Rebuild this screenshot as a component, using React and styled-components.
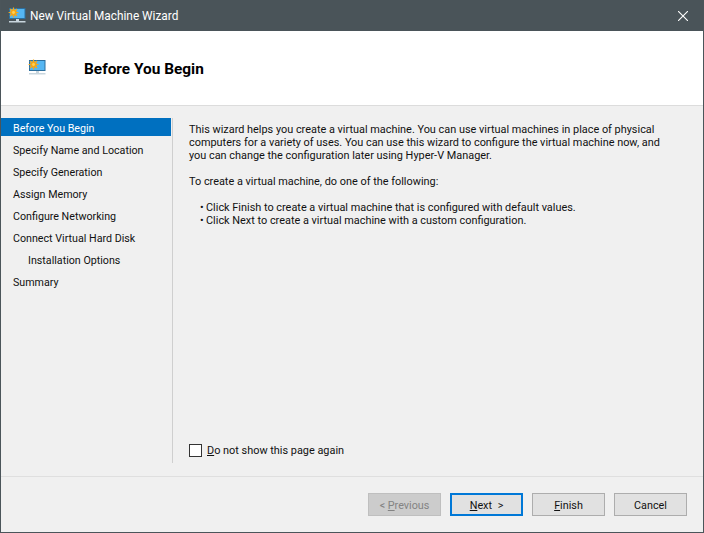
import styled, { createGlobalStyle } from "styled-components";

const GlobalStyle = createGlobalStyle`
  html, body {
    margin: 0;
    padding: 0;
    background: #f0f0f0;
  }
  * {
    box-sizing: border-box;
  }
`;

const MonitorIcon = ({ size = 18 }) => (
  <svg width={size} height={size} viewBox="0 0 18 18">
    <rect x="1.5" y="1.5" width="15.5" height="10" fill="#55b6f2" stroke="#2c6f9e" />
    <path d="M8 12h3v2H8z" fill="#c8d4dc" />
    <path d="M1 14h16.5v1.5H1z" fill="#c9d6de" />
    <circle cx="5.5" cy="5.5" r="3.2" fill="#f39c12" />
    <path
      d="M5.5 0.6v9.8M0.6 5.5h9.8M2 2l7 7M9 2l-7 7"
      stroke="#f7a917"
      strokeWidth="1.2"
    />
    <circle cx="5.5" cy="5.5" r="1.4" fill="#fbd25a" />
  </svg>
);

const steps = [
  { label: "Before You Begin", active: true },
  { label: "Specify Name and Location" },
  { label: "Specify Generation" },
  { label: "Assign Memory" },
  { label: "Configure Networking" },
  { label: "Connect Virtual Hard Disk" },
  { label: "Installation Options", nested: true },
  { label: "Summary" },
];

export default function App() {
  return (
    <>
      <GlobalStyle />
      <Window>
        <TitleBar>
          <TitleGroup>
            <MonitorIcon />
            <TitleText>New Virtual Machine Wizard</TitleText>
          </TitleGroup>
          <CloseButton aria-label="Close">
            <svg width="10" height="10" viewBox="0 0 10 10">
              <path d="M0 0l10 10M10 0L0 10" stroke="#fff" strokeWidth="1.1" />
            </svg>
          </CloseButton>
        </TitleBar>
        <Header>
          <HeaderIcon>
            <MonitorIcon />
          </HeaderIcon>
          <Heading>Before You Begin</Heading>
        </Header>
        <Body>
          <Nav>
            {steps.map((step) => (
              <NavItem key={step.label} $active={step.active} $nested={step.nested}>
                {step.label}
              </NavItem>
            ))}
          </Nav>
          <Content>
            <Intro>
              <Paragraph>
                This wizard helps you create a virtual machine. You can use virtual machines in place of physical
                <br />
                computers for a variety of uses. You can use this wizard to configure the virtual machine now, and
                <br />
                you can change the configuration later using Hyper-V Manager.
              </Paragraph>
              <Paragraph>To create a virtual machine, do one of the following:</Paragraph>
              <BulletList>
                <BulletItem>Click Finish to create a virtual machine that is configured with default values.</BulletItem>
                <BulletItem>Click Next to create a virtual machine with a custom configuration.</BulletItem>
              </BulletList>
            </Intro>
            <CheckRow>
              <CheckBox />
              <CheckLabel>
                <u>D</u>o not show this page again
              </CheckLabel>
            </CheckRow>
          </Content>
        </Body>
        <Footer>
          <WizardButton disabled>
            &lt; <u>P</u>revious
          </WizardButton>
          <WizardButton $primary>
            <u>N</u>ext &gt;
          </WizardButton>
          <WizardButton>
            <u>F</u>inish
          </WizardButton>
          <WizardButton>Cancel</WizardButton>
        </Footer>
      </Window>
    </>
  );
}

const Window = styled.div`
  width: 704px;
  height: 533px;
  display: flex;
  flex-direction: column;
  background: #f0f0f0;
  border: 1px solid #4b555a;
  border-top: none;
  font-family: Roboto, "Liberation Sans", sans-serif;
  font-size: 10.7px;
  color: #111;
`;

const TitleBar = styled.div`
  height: 31px;
  flex: none;
  display: flex;
  align-items: center;
  justify-content: space-between;
  background: #4a5459;
  padding: 0 15px 0 7px;
`;

const TitleGroup = styled.div`
  display: flex;
  align-items: center;
  gap: 4px;
`;

const TitleText = styled.span`
  color: #fff;
  font-size: 11.85px;
`;

const CloseButton = styled.div`
  display: flex;
  align-items: center;
`;

const Header = styled.div`
  height: 75px;
  flex: none;
  display: flex;
  align-items: center;
  background: #fff;
  border-bottom: 1px solid #dcdcdc;
  padding: 0 0 0 27px;
`;

const HeaderIcon = styled.div`
  width: 56px;
  display: flex;
`;

const Heading = styled.h1`
  margin: 2px 0 0;
  font-size: 15.4px;
  font-weight: 700;
  color: #000;
`;

const Body = styled.div`
  flex: 1;
  display: flex;
  padding-top: 12px;
  padding-bottom: 13px;
  border-bottom: 1px solid #dfdfdf;
`;

const Nav = styled.div`
  width: 172px;
  flex: none;
  display: flex;
  flex-direction: column;
  gap: 4px;
  border-right: 1px solid #cfcfcf;
`;

const NavItem = styled.div`
  height: 18px;
  width: 170px;
  line-height: 21px;
  padding-left: ${(p) => (p.$nested ? 27 : 12)}px;
  background: ${(p) => (p.$active ? "#0070c0" : "transparent")};
  color: ${(p) => (p.$active ? "#fff" : "#111")};
`;

const Content = styled.div`
  flex: 1;
  display: flex;
  flex-direction: column;
  justify-content: space-between;
  padding: 5px 16px 6px 16px;
  font-size: 10.9px;
`;

const Intro = styled.div`
  display: flex;
  flex-direction: column;
  gap: 13px;
`;

const Paragraph = styled.p`
  margin: 0;
  line-height: 13px;
  white-space: nowrap;
`;

const BulletList = styled.div`
  display: flex;
  flex-direction: column;
  padding-left: 11px;
  line-height: 13px;
`;

const BulletItem = styled.div`
  white-space: nowrap;
  &::before {
    content: "•";
    display: inline-block;
    width: 6px;
  }
`;

const CheckRow = styled.label`
  display: flex;
  align-items: center;
  gap: 5px;
`;

const CheckBox = styled.span`
  width: 13px;
  height: 13px;
  background: #fff;
  border: 1px solid #333;
`;

const CheckLabel = styled.span`
  padding-top: 1px;
`;

const Footer = styled.div`
  height: 55px;
  flex: none;
  display: flex;
  justify-content: flex-end;
  gap: 9px;
  padding: 16px 16px 0 0;
`;

const WizardButton = styled.div`
  width: 73px;
  height: 23px;
  display: flex;
  align-items: center;
  justify-content: center;
  white-space: pre;
  padding-top: 1px;
  font-size: 10.8px;
  word-spacing: ${(p) => (p.$primary ? 3 : 0)}px;
  background: ${(p) => (p.disabled ? "#cccccc" : "#e1e1e1")};
  color: ${(p) => (p.disabled ? "#838383" : "#111")};
  border: ${(p) => (p.$primary ? "2px solid #0078d7" : p.disabled ? "1px solid #bfbfbf" : "1px solid #adadad")};
`;
